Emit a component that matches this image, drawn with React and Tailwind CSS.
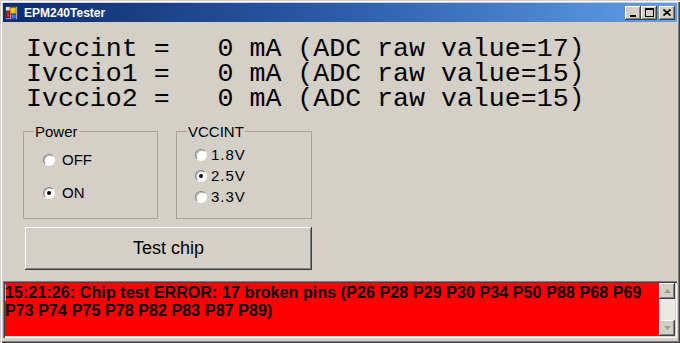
import React from "react";

const readings = [
  { name: "Ivccint ", raw: 17 },
  { name: "Ivccio1 ", raw: 15 },
  { name: "Ivccio2 ", raw: 15 },
];

const raised =
  "shadow-[inset_-1px_-1px_#404040,inset_1px_1px_#ffffff,inset_-2px_-2px_#808080]";

const Radio = ({ checked }) => (
  <span className="flex h-[12px] w-[12px] shrink-0 items-center justify-center rounded-full border border-t-[#808080] border-l-[#808080] border-r-white border-b-white bg-white shadow-[inset_1px_1px_#c4c0b8]">
    {checked && <span className="h-[4px] w-[4px] rounded-full bg-black" />}
  </span>
);

const Option = ({ label, checked, gap }) => (
  <div className={`flex h-[16px] items-center ${gap}`}>
    <Radio checked={checked} />
    <span className="leading-[16px]">{label}</span>
  </div>
);

const AppIcon = () => (
  <svg width="13" height="14" viewBox="0 0 13 14" className="shrink-0">
    <rect x="0.5" y="0.5" width="12" height="13" fill="#dcdcdc" stroke="#2a3a80" />
    <rect x="5" y="1.5" width="6" height="6" fill="#f5c400" stroke="#7a5a00" strokeWidth="0.8" />
    <rect x="1.5" y="5" width="3" height="7" fill="#e02020" stroke="#600000" strokeWidth="0.8" />
    <rect x="6" y="8.5" width="5" height="4" fill="#3a7ae0" stroke="#1a3a90" strokeWidth="0.8" />
  </svg>
);

const CaptionButton = ({ children, className = "" }) => (
  <div
    className={`flex h-[14px] w-[16px] items-center justify-center bg-[#d4d0c8] ${raised} ${className}`}
  >
    {children}
  </div>
);

const ScrollArrow = ({ up }) => (
  <div className={`flex h-[16px] w-[16px] items-center justify-center bg-[#d4d0c8] ${raised}`}>
    <svg width="7" height="4" viewBox="0 0 7 4">
      {up ? (
        <polygon points="3.5,0 7,4 0,4" fill="#a19d8a" />
      ) : (
        <polygon points="0,0 7,0 3.5,4" fill="#a19d8a" />
      )}
    </svg>
  </div>
);

export default function App() {
  return (
    <div className="h-[343px] w-[680px] bg-[#d4d0c8] px-[3px] pt-[3px] pb-[4px] font-['Liberation_Sans',Arial,sans-serif] text-black shadow-[inset_1px_1px_#d4d0c8,inset_2px_2px_#ffffff,inset_-1px_-1px_#404040,inset_-2px_-2px_#808080] flex flex-col">
      {/* title bar */}
      <div className="flex h-[19px] items-center bg-linear-to-r from-[#0e2b70] via-[#2d5ca8] to-[#60a0e8] pl-[2px] pr-[2px]">
        <AppIcon />
        <span className="ml-[6px] text-[12px] font-bold leading-none text-white">EPM240Tester</span>
        <div className="ml-auto flex items-center">
          <CaptionButton>
            <span className="mt-[6px] h-[2px] w-[6px] bg-black" />
          </CaptionButton>
          <CaptionButton>
            <span className="h-[9px] w-[9px] border border-t-2 border-black" />
          </CaptionButton>
          <CaptionButton className="ml-[2px]">
            <svg width="8" height="7" viewBox="0 0 8 7">
              <path d="M0.5 0.5 L7.5 6.5 M7.5 0.5 L0.5 6.5" stroke="#000" strokeWidth="1.6" />
            </svg>
          </CaptionButton>
        </div>
      </div>

      {/* client area */}
      <div className="flex flex-1 flex-col">
        <div className="mt-[15px] pl-[23px] font-['Liberation_Mono','Courier_New',monospace] text-[26.6px] leading-[25px] whitespace-pre">
          {readings.map((r) => (
            <div key={r.name}>{`${r.name}=   0 mA (ADC raw value=${r.raw})`}</div>
          ))}
        </div>

        <div className="mt-[11px] ml-[20px] flex gap-[18px] text-[15px]">
          <fieldset className="h-[96px] w-[135px] border border-[#a7a493]">
            <legend className="ml-[10px] px-[1px] leading-[17px]">Power</legend>
            <div className="flex flex-col gap-[17px] pt-[12px] pl-[19px]">
              <Option label="OFF" gap="gap-[7px]" />
              <Option label="ON" checked gap="gap-[7px]" />
            </div>
          </fieldset>
          <fieldset className="h-[96px] w-[136px] border border-[#a7a493]">
            <legend className="ml-[10px] px-[1px] leading-[17px]">VCCINT</legend>
            <div className="flex flex-col gap-[5px] pt-[7px] pl-[18px] tracking-[1px]">
              <Option label="1.8V" gap="gap-[4px]" />
              <Option label="2.5V" checked gap="gap-[4px]" />
              <Option label="3.3V" gap="gap-[4px]" />
            </div>
          </fieldset>
        </div>

        <button
          className={`mt-[8px] ml-[22px] flex h-[43px] w-[287px] items-center justify-center bg-[#d4d0c8] text-[18px] ${raised}`}
        >
          Test chip
        </button>

        <div className="mt-[11px] flex h-[57px] p-[2px] shadow-[inset_1px_1px_#808080,inset_2px_2px_#404040,inset_-1px_-1px_#ffffff,inset_-2px_-2px_#d4d0c8]">
          <div className="flex-1 bg-[#ff0000] pt-px text-[16px] font-bold leading-[17.5px] tracking-[0.1px]">
            <span className="inline-block h-[17px] w-px -mr-px align-top bg-[#00ffff]" />
            15:21:26: Chip test ERROR: 17 broken pins (P26 P28 P29 P30 P34 P50 P88 P68 P69 P73 P74 P75 P78 P82 P83 P87 P89)
          </div>
          <div className="flex w-[16px] flex-col bg-[#ebe9e3]">
            <ScrollArrow up />
            <div className="flex-1" />
            <ScrollArrow />
          </div>
        </div>
      </div>
    </div>
  );
}
